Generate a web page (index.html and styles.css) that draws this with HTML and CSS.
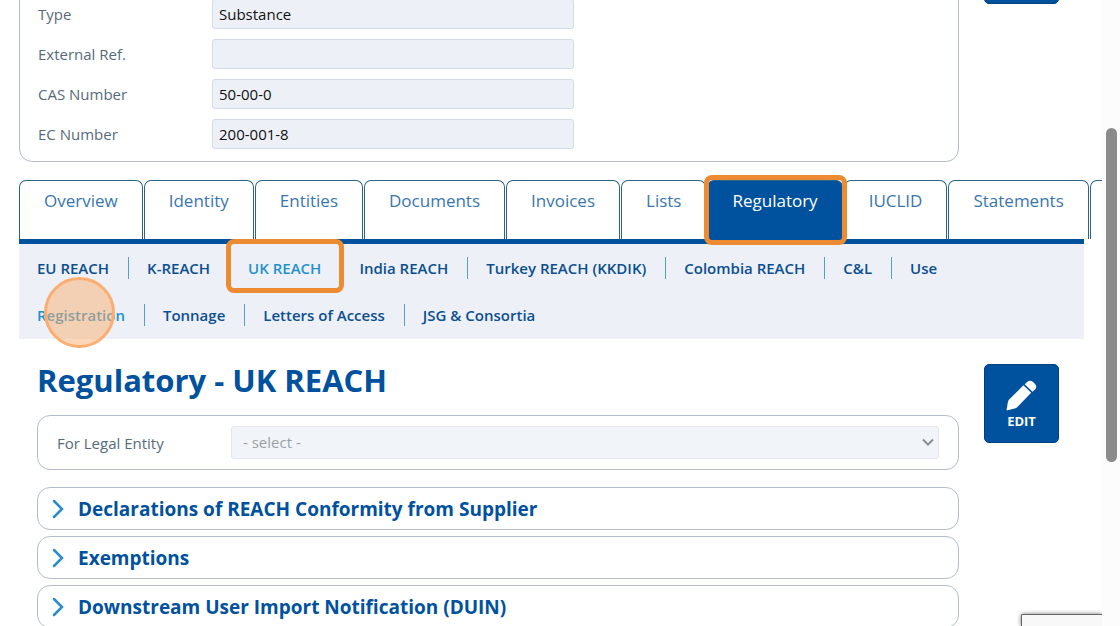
FILE: index.html
```html
<!DOCTYPE html>
<html lang="en">
<head>
<meta charset="utf-8">
<title>Regulatory - UK REACH</title>
<link rel="stylesheet" href="styles.css">
</head>
<body>
<div class="window">
  <div class="viewport">
    <main class="page">
      <section class="columns">
        <form class="card details">
          <div class="field"><label for="type">Type</label><input id="type" type="text" value="Substance" readonly></div>
          <div class="field"><label for="ext">External Ref.</label><input id="ext" type="text" value="" readonly></div>
          <div class="field"><label for="cas">CAS Number</label><input id="cas" type="text" value="50-00-0" readonly></div>
          <div class="field"><label for="ec">EC Number</label><input id="ec" type="text" value="200-001-8" readonly></div>
        </form>
        <button class="action" type="button" aria-label="Details action"></button>
      </section>

      <section class="section-nav">
        <nav class="tabs" aria-label="Sections">
          <a class="tab" href="#">Overview</a>
          <a class="tab" href="#">Identity</a>
          <a class="tab" href="#">Entities</a>
          <a class="tab" href="#">Documents</a>
          <a class="tab" href="#">Invoices</a>
          <a class="tab" href="#">Lists</a>
          <a class="tab tab-active marked" href="#">Regulatory</a>
          <a class="tab" href="#">IUCLID</a>
          <a class="tab" href="#">Statements</a>
          <a class="tab tab-next" href="#" aria-label="Next section"></a>
        </nav>
        <div class="subnav">
          <nav class="links" aria-label="Regulations">
            <a class="link" href="#">EU REACH</a>
            <a class="link" href="#">K-REACH</a>
            <a class="link link-active marked" href="#">UK REACH</a>
            <a class="link" href="#">India REACH</a>
            <a class="link" href="#">Turkey REACH (KKDIK)</a>
            <a class="link" href="#">Colombia REACH</a>
            <a class="link" href="#">C&amp;L</a>
            <a class="link" href="#">Use</a>
          </nav>
          <nav class="links" aria-label="UK REACH pages">
            <a class="link link-active clicked" href="#">Registration</a>
            <a class="link" href="#">Tonnage</a>
            <a class="link" href="#">Letters of Access</a>
            <a class="link" href="#">JSG &amp; Consortia</a>
          </nav>
        </div>
      </section>

      <section class="columns">
        <div class="content">
          <h1 class="title">Regulatory - UK REACH</h1>
          <div class="card entity">
            <label for="entity">For Legal Entity</label>
            <div class="select-wrap">
              <select id="entity" disabled><option>- select -</option></select>
              <svg class="caret" viewBox="0 0 12 8" aria-hidden="true"><path d="M1 1.5 6 6.5 11 1.5"/></svg>
            </div>
          </div>
          <div class="panels">
            <button class="card panel" type="button"><svg class="chevron" viewBox="0 0 12 20" aria-hidden="true"><path d="M2 2 10 10 2 18"/></svg>Declarations of REACH Conformity from Supplier</button>
            <button class="card panel" type="button"><svg class="chevron" viewBox="0 0 12 20" aria-hidden="true"><path d="M2 2 10 10 2 18"/></svg>Exemptions</button>
            <button class="card panel" type="button"><svg class="chevron" viewBox="0 0 12 20" aria-hidden="true"><path d="M2 2 10 10 2 18"/></svg>Downstream User Import Notification (DUIN)</button>
          </div>
        </div>
        <button class="action action-edit" type="button">
          <svg class="pencil" viewBox="0 0 32 32" aria-hidden="true"><path d="M0.5 31.5 2 22.5Q2.400 21 3.500 19.800L18 5.500 26 13.200 11.500 28Q10.500 29 9 29.400Z"/><path d="M19.300 4.300 21.800 2Q24.500-.5 28 2L30 4Q32.500 7 30 9.800L27.300 12Z"/></svg>
          EDIT
        </button>
      </section>
    </main>
    <aside class="badge" aria-hidden="true"></aside>
  </div>
  <div class="scrollbar"><div class="thumb"></div></div>
</div>
</body>
</html>
```
FILE: styles.css
```css
*, *::before, *::after { box-sizing: border-box; }

body {
  margin: 0;
  background: #fff;
  color: #566b7a;
  font: 15px/20px "Open Sans", "Noto Sans", sans-serif;
}

button, input, select { font: inherit; }
a { text-decoration: none; }

.window {
  display: flex;
  height: 100vh;
  overflow: hidden;
}

.viewport {
  position: relative;
  flex: 1;
  min-width: 0;
  overflow: hidden;
}

/* Page is scrolled so that the top of the details card is out of view. */
.page {
  margin-top: -75px;
  padding-left: 19px;
}

.columns {
  display: flex;
  align-items: flex-start;
  gap: 25px;
  padding-right: 43px;
}

.card {
  border: 1px solid #b3bdc9;
  border-radius: 13px;
  background: #fff;
}

.details {
  flex: 1;
  display: grid;
  gap: 10px;
  padding: 73px 18px 12px;
}

.field {
  display: flex;
  align-items: center;
}

.field label { width: 174px; }

.field input {
  width: 362px;
  height: 30px;
  padding: 0 6px 1px;
  border: 1px solid #d3dce6;
  border-radius: 3px;
  background: #edf0f7;
  color: #111;
}

.action {
  display: flex;
  flex-direction: column;
  align-items: center;
  width: 75px;
  height: 79px;
  margin: 0;
  padding: 15px 0 0;
  border: 1px solid #003f80;
  border-radius: 5px;
  background: #00519e;
  color: #fff;
  font-size: 13px;
  font-weight: 700;
  line-height: 20px;
}

.action-edit { margin-top: 25px; }

.pencil {
  width: 31px;
  height: 31px;
  fill: #fff;
}

.section-nav {
  margin-top: 18px;
  padding-right: 18px;
}

.tabs {
  display: flex;
  gap: 1px;
  height: 59px;
}

.tab {
  flex: none;
  padding: 8px 24px 0;
  border: 1px solid #2a6488;
  border-bottom: 0;
  border-radius: 7px 7px 0 0;
  color: #3a76ad;
  font-size: 17px;
  line-height: 24px;
}

.tab-active {
  background: #00519e;
  color: #fff;
}

.marked { position: relative; }

.marked::after {
  content: "";
  position: absolute;
  border: 5px solid #ec8b32;
  border-radius: 8px;
}

.tab.marked::after { inset: -6px -5px -6px -4px; }
.link.marked::after { inset: -18px -4px -14px; }

.subnav {
  padding: 13px 0;
  border-top: 5px solid #00519e;
  background: #edf0f7;
}

.links {
  display: flex;
  flex-wrap: wrap;
}

.links + .links { margin-top: 25px; }

.link {
  padding: 0 19px 0 18px;
  border-right: 1px solid #4fa3c4;
  color: #0c4f8f;
  font-weight: 600;
  line-height: 22px;
}

.link:last-child { border-right: 0; }
.link-active { color: #2591cb; }

.clicked { position: relative; }

.clicked::after {
  content: "";
  position: absolute;
  top: -27px;
  left: 25px;
  width: 71px;
  height: 71px;
  border: 3px solid #fbae72;
  border-radius: 50%;
  background: rgba(250, 174, 112, 0.5);
}

.content {
  flex: 1;
  min-width: 0;
  padding-left: 18px;
}

.title {
  margin: 0;
  padding: 19px 0 12px;
  color: #00519e;
  font-size: 31px;
  font-weight: 700;
  line-height: 45px;
}

.entity {
  display: flex;
  align-items: center;
  padding: 10px 19px;
}

.entity label { width: 174px; }

.select-wrap {
  position: relative;
  flex: 1;
}

.select-wrap select {
  display: block;
  width: 100%;
  height: 33px;
  padding: 0 11px 2px;
  border: 1px solid #e2e8ee;
  border-radius: 3px;
  background: #f1f5fa;
  color: #9b9fa4;
  opacity: 1;
  appearance: none;
}

.caret {
  position: absolute;
  top: 12px;
  right: 5px;
  width: 12px;
  height: 8px;
  fill: none;
  stroke: #8a9097;
  stroke-width: 2;
}

.panels {
  display: grid;
  gap: 6px;
  margin-top: 17px;
}

.panel {
  display: flex;
  align-items: center;
  gap: 14px;
  height: 43px;
  padding: 0 14px;
  color: #00519e;
  font-size: 19px;
  font-weight: 700;
  text-align: left;
}

.chevron {
  width: 12px;
  height: 20px;
  fill: none;
  stroke: #2a8cc8;
  stroke-width: 2.500;
  stroke-linecap: round;
}

.badge {
  position: absolute;
  right: 0;
  bottom: 0;
  width: 81px;
  height: 12px;
  border: 1px solid #666;
  border-width: 1px 0 0 1px;
  border-radius: 2px 0 0;
  background: #f8f8f8;
  box-shadow: 0 0 4px #777;
}

.scrollbar {
  width: 18px;
  padding: 128px 3px 0 4px;
  background: #fcfcfc;
}

.thumb {
  height: 334px;
  border-radius: 6px;
  background: #8b8b8b;
}
```
